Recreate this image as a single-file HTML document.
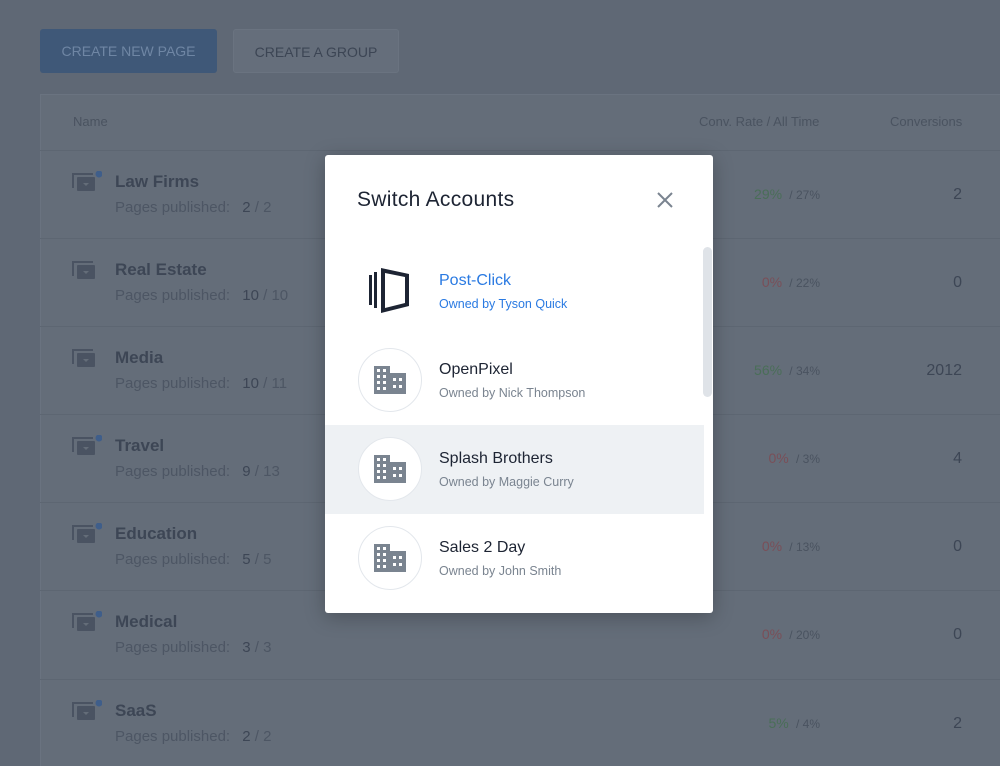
<!DOCTYPE html>
<html><head><meta charset="utf-8"><style>
*{box-sizing:border-box;margin:0;padding:0}
html,body{width:1000px;height:766px;overflow:hidden}
body{background:#5f6875;font-family:"Liberation Sans",Arial,sans-serif;position:relative}
.btn{position:absolute;top:29px;height:44px;border-radius:3px;font-size:14px;line-height:44px;text-align:center}
.b1{left:40px;width:177px;background:#3f5878;color:#6f86a4}
.b2{left:233px;width:166px;background:#656e7b;color:#3c4554;border:1px solid #6a7380}
.card{position:absolute;left:40px;top:94px;width:970px;height:680px;background:#646d79;border-left:1px solid #6a7380;border-top:1px solid #6a7380}
.hdr{position:absolute;top:114px;font-size:13px;color:#4a5360}
.row{position:absolute;left:40px;width:960px;height:88px;border-top:1px solid #5d6672}
.ic{position:absolute;left:32px;top:20px;width:30px;height:22px}
.nm{position:absolute;left:75px;top:21px;font-size:17px;font-weight:bold;color:#3d4655}
.pp{position:absolute;left:75px;top:48px;font-size:15px;color:#4d5664}
.pp b{font-weight:normal;color:#3d4655;margin-left:8px}
.pp span{color:#4d5664}
.rate{position:absolute;right:180px;top:35px;font-size:14px}
.rate i{font-style:normal;font-size:12px;color:#4a5360}
.cv{position:absolute;right:38px;top:35px;font-size:16px;color:#3d4655}
.g{color:#4a6e58}.r{color:#7a4f58}
.modal{position:absolute;left:325px;top:155px;width:388px;height:458px;background:#fff;border-radius:3px;box-shadow:0 4px 20px rgba(0,0,0,.25);overflow:hidden}
.title{position:absolute;left:32px;top:33px;font-size:21px;color:#1d2433;letter-spacing:.3px}
.x{position:absolute;left:331px;top:36px}
.it{position:absolute;left:0;width:379px;height:89px}
.av{position:absolute;left:33px;top:12px;width:64px;height:64px;border-radius:50%;border:1px solid #e3e7ec;background:#fff}
.av svg{position:absolute;left:15px;top:17px}
.in{position:absolute;left:114px;top:25px;font-size:16px;color:#1d2433}
.io{position:absolute;left:114px;top:50px;font-size:12.5px;color:#7a8490}
.sb{position:absolute;left:378px;top:92px;width:9px;height:150px;border-radius:5px;background:#dfe3e8}
</style></head><body>
<div class="btn b1">CREATE NEW PAGE</div>
<div class="btn b2">CREATE A GROUP</div>
<div class="card"></div>
<div class="hdr" style="left:73px">Name</div>
<div class="hdr" style="left:699px">Conv. Rate / All Time</div>
<div class="hdr" style="left:890px">Conversions</div>

<div class="row" style="top:150px"><svg class="ic" viewBox="0 0 30 22"><path d="M1 17V3h20" stroke="#4a5362" stroke-width="2" fill="none"/><rect x="5" y="6" width="18" height="14" rx="1" fill="#4a5362"/><path d="M11 12h6l-3 3z" fill="#646d79"/><circle cx="27" cy="3" r="3.5" fill="#3f5e8a"/></svg><div class="nm">Law Firms</div><div class="pp">Pages published: <b>2 <span>/ 2</span></b></div><div class="rate g">29% <i>&nbsp;/ 27%</i></div><div class="cv">2</div></div>
<div class="row" style="top:238px"><svg class="ic" viewBox="0 0 30 22"><path d="M1 17V3h20" stroke="#4a5362" stroke-width="2" fill="none"/><rect x="5" y="6" width="18" height="14" rx="1" fill="#4a5362"/><path d="M11 12h6l-3 3z" fill="#646d79"/></svg><div class="nm">Real Estate</div><div class="pp">Pages published: <b>10 <span>/ 10</span></b></div><div class="rate r">0% <i>&nbsp;/ 22%</i></div><div class="cv">0</div></div>
<div class="row" style="top:326px"><svg class="ic" viewBox="0 0 30 22"><path d="M1 17V3h20" stroke="#4a5362" stroke-width="2" fill="none"/><rect x="5" y="6" width="18" height="14" rx="1" fill="#4a5362"/><path d="M11 12h6l-3 3z" fill="#646d79"/></svg><div class="nm">Media</div><div class="pp">Pages published: <b>10 <span>/ 11</span></b></div><div class="rate g">56% <i>&nbsp;/ 34%</i></div><div class="cv">2012</div></div>
<div class="row" style="top:414px"><svg class="ic" viewBox="0 0 30 22"><path d="M1 17V3h20" stroke="#4a5362" stroke-width="2" fill="none"/><rect x="5" y="6" width="18" height="14" rx="1" fill="#4a5362"/><path d="M11 12h6l-3 3z" fill="#646d79"/><circle cx="27" cy="3" r="3.5" fill="#3f5e8a"/></svg><div class="nm">Travel</div><div class="pp">Pages published: <b>9 <span>/ 13</span></b></div><div class="rate r">0% <i>&nbsp;/ 3%</i></div><div class="cv">4</div></div>
<div class="row" style="top:502px"><svg class="ic" viewBox="0 0 30 22"><path d="M1 17V3h20" stroke="#4a5362" stroke-width="2" fill="none"/><rect x="5" y="6" width="18" height="14" rx="1" fill="#4a5362"/><path d="M11 12h6l-3 3z" fill="#646d79"/><circle cx="27" cy="3" r="3.5" fill="#3f5e8a"/></svg><div class="nm">Education</div><div class="pp">Pages published: <b>5 <span>/ 5</span></b></div><div class="rate r">0% <i>&nbsp;/ 13%</i></div><div class="cv">0</div></div>
<div class="row" style="top:590px"><svg class="ic" viewBox="0 0 30 22"><path d="M1 17V3h20" stroke="#4a5362" stroke-width="2" fill="none"/><rect x="5" y="6" width="18" height="14" rx="1" fill="#4a5362"/><path d="M11 12h6l-3 3z" fill="#646d79"/><circle cx="27" cy="3" r="3.5" fill="#3f5e8a"/></svg><div class="nm">Medical</div><div class="pp">Pages published: <b>3 <span>/ 3</span></b></div><div class="rate r">0% <i>&nbsp;/ 20%</i></div><div class="cv">0</div></div>
<div class="row" style="top:679px"><svg class="ic" viewBox="0 0 30 22"><path d="M1 17V3h20" stroke="#4a5362" stroke-width="2" fill="none"/><rect x="5" y="6" width="18" height="14" rx="1" fill="#4a5362"/><path d="M11 12h6l-3 3z" fill="#646d79"/><circle cx="27" cy="3" r="3.5" fill="#3f5e8a"/></svg><div class="nm">SaaS</div><div class="pp">Pages published: <b>2 <span>/ 2</span></b></div><div class="rate g">5% <i>&nbsp;/ 4%</i></div><div class="cv">2</div></div>

<div class="modal">
<div class="title">Switch Accounts</div>
<svg class="x" width="18" height="18" viewBox="0 0 18 18"><path d="M2 2L16 16M16 2L2 16" stroke="#7a8490" stroke-width="2"/></svg>
<div class="it" style="top:92px">
<svg style="position:absolute;left:40px;top:18px" width="50" height="50" viewBox="0 0 50 50"><rect x="4" y="10" width="3" height="30" fill="#1d2433"/><rect x="9" y="7" width="3" height="36" fill="#1d2433"/><path d="M16 3L44 9V41L16 48Z M20 8V43L40 38V12Z" fill="#1d2433" fill-rule="evenodd"/></svg>
<div class="in" style="color:#2a7ae2">Post-Click</div><div class="io" style="color:#2a7ae2">Owned by Tyson Quick</div></div>
<div class="it" style="top:181px"><div class="av"><svg width="32" height="28" viewBox="0 0 32 28"><path d="M0 0H16V7H32V28H0Z" fill="#7a8490"/><g fill="#fff"><rect x="3" y="3" width="3" height="3"/><rect x="9" y="3" width="3" height="3"/><rect x="3" y="9" width="3" height="3"/><rect x="9" y="9" width="3" height="3"/><rect x="3" y="15" width="3" height="3"/><rect x="9" y="15" width="3" height="3"/><rect x="3" y="21" width="3" height="3"/><rect x="9" y="21" width="3" height="3"/><rect x="19" y="12" width="3" height="3"/><rect x="25" y="12" width="3" height="3"/><rect x="19" y="19" width="3" height="3"/><rect x="25" y="19" width="3" height="3"/></g></svg></div><div class="in">OpenPixel</div><div class="io">Owned by Nick Thompson</div></div>
<div class="it" style="top:270px;background:#eef1f4"><div class="av"><svg width="32" height="28" viewBox="0 0 32 28"><path d="M0 0H16V7H32V28H0Z" fill="#7a8490"/><g fill="#fff"><rect x="3" y="3" width="3" height="3"/><rect x="9" y="3" width="3" height="3"/><rect x="3" y="9" width="3" height="3"/><rect x="9" y="9" width="3" height="3"/><rect x="3" y="15" width="3" height="3"/><rect x="9" y="15" width="3" height="3"/><rect x="3" y="21" width="3" height="3"/><rect x="9" y="21" width="3" height="3"/><rect x="19" y="12" width="3" height="3"/><rect x="25" y="12" width="3" height="3"/><rect x="19" y="19" width="3" height="3"/><rect x="25" y="19" width="3" height="3"/></g></svg></div><div class="in">Splash Brothers</div><div class="io">Owned by Maggie Curry</div></div>
<div class="it" style="top:359px"><div class="av"><svg width="32" height="28" viewBox="0 0 32 28"><path d="M0 0H16V7H32V28H0Z" fill="#7a8490"/><g fill="#fff"><rect x="3" y="3" width="3" height="3"/><rect x="9" y="3" width="3" height="3"/><rect x="3" y="9" width="3" height="3"/><rect x="9" y="9" width="3" height="3"/><rect x="3" y="15" width="3" height="3"/><rect x="9" y="15" width="3" height="3"/><rect x="3" y="21" width="3" height="3"/><rect x="9" y="21" width="3" height="3"/><rect x="19" y="12" width="3" height="3"/><rect x="25" y="12" width="3" height="3"/><rect x="19" y="19" width="3" height="3"/><rect x="25" y="19" width="3" height="3"/></g></svg></div><div class="in">Sales 2 Day</div><div class="io">Owned by John Smith</div></div>
<div class="sb"></div>
</div>
</body></html>
